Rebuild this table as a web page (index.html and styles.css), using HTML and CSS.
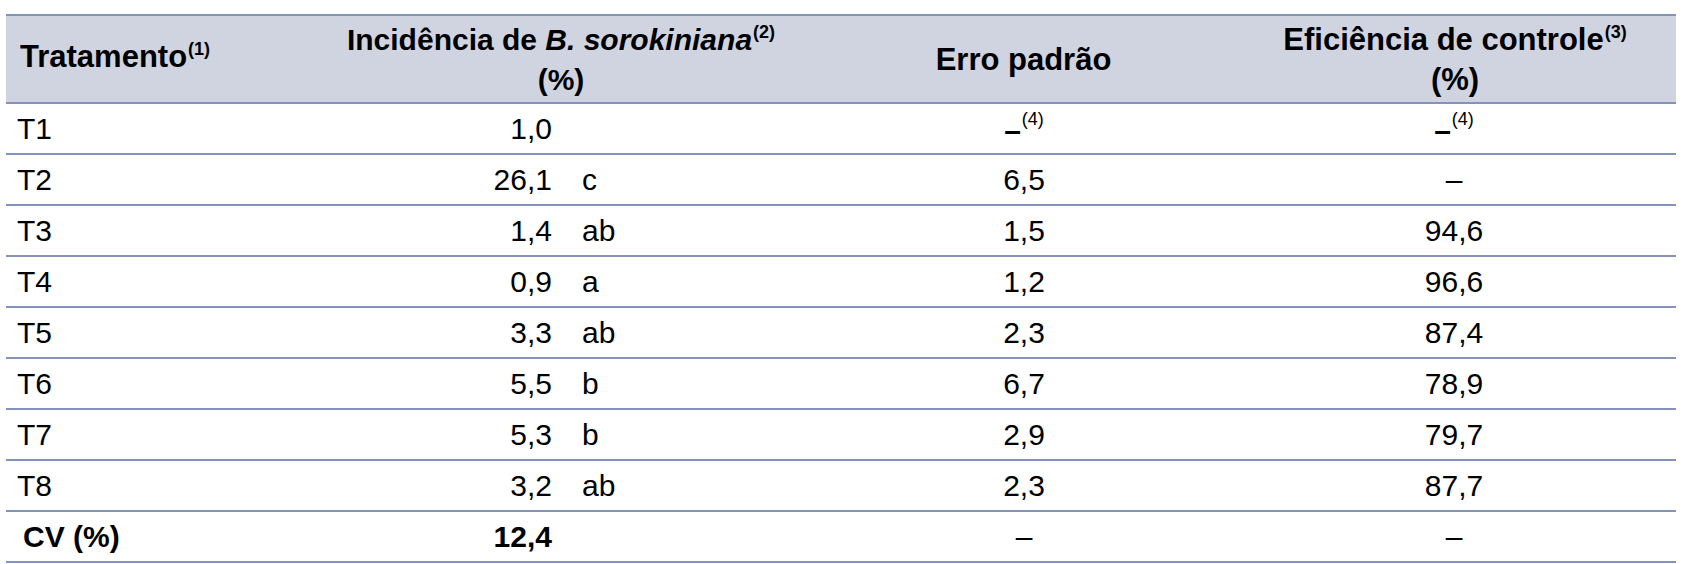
FILE: index.html
```html
<!DOCTYPE html>
<html lang="pt">
<head>
<meta charset="utf-8">
<title>Tabela</title>
<link rel="stylesheet" href="styles.css">
</head>
<body>
<table class="tbl">
  <colgroup>
    <col class="c-trat">
    <col class="c-val">
    <col class="c-let">
    <col class="c-erro">
    <col class="c-efic">
  </colgroup>
  <thead>
    <tr class="head">
      <th class="h-trat">Tratamento<sup>(1)</sup></th>
      <th class="h-inc" colspan="2">Incidência de <i>B. sorokiniana</i><sup>(2)</sup><br>(%)</th>
      <th class="h-erro">Erro padrão</th>
      <th class="h-efic">Eficiência de controle<sup>(3)</sup><br>(%)</th>
    </tr>
  </thead>
  <tbody>
    <tr><td class="trat">T1</td><td class="val">1,0</td><td class="let"></td><td class="erro"><span class="lowdash">–</span><sup>(4)</sup></td><td class="efic"><span class="lowdash">–</span><sup>(4)</sup></td></tr>
    <tr><td class="trat">T2</td><td class="val">26,1</td><td class="let">c</td><td class="erro">6,5</td><td class="efic">–</td></tr>
    <tr><td class="trat">T3</td><td class="val">1,4</td><td class="let">ab</td><td class="erro">1,5</td><td class="efic">94,6</td></tr>
    <tr><td class="trat">T4</td><td class="val">0,9</td><td class="let">a</td><td class="erro">1,2</td><td class="efic">96,6</td></tr>
    <tr><td class="trat">T5</td><td class="val">3,3</td><td class="let">ab</td><td class="erro">2,3</td><td class="efic">87,4</td></tr>
    <tr><td class="trat">T6</td><td class="val">5,5</td><td class="let">b</td><td class="erro">6,7</td><td class="efic">78,9</td></tr>
    <tr><td class="trat">T7</td><td class="val">5,3</td><td class="let">b</td><td class="erro">2,9</td><td class="efic">79,7</td></tr>
    <tr><td class="trat">T8</td><td class="val">3,2</td><td class="let">ab</td><td class="erro">2,3</td><td class="efic">87,7</td></tr>
    <tr class="cv"><td class="trat">CV (%)</td><td class="val">12,4</td><td class="let"></td><td class="erro">–</td><td class="efic">–</td></tr>
  </tbody>
</table>
</body>
</html>
```
FILE: styles.css
```css
html, body {
  margin: 0;
  padding: 0;
  background: #ffffff;
}

body {
  padding: 14px 0 0 6px;
  font-family: "Liberation Sans", Arial, sans-serif;
  color: #000000;
}

.tbl {
  border-collapse: collapse;
  table-layout: fixed;
  width: 1670px;
  font-size: 30px;
}

.c-trat { width: 272px; }
.c-val { width: 282px; }
.c-let { width: 278px; }
.c-erro { width: 362px; }
.c-efic { width: 476px; }

.tbl tr {
  border-top: 2px solid #8592bb;
  border-bottom: 2px solid #8592bb;
}

.head {
  background: #d0d4e0;
  height: 88px;
}

.head th {
  font-size: 31px;
  font-weight: bold;
  line-height: 35px;
  padding: 0;
  vertical-align: middle;
}

.h-trat {
  text-align: left;
  padding-left: 14px !important;
}

.head .h-inc {
  font-size: 30px;
  text-align: center;
  padding-left: 6px;
}

.h-erro {
  text-align: center;
  padding-left: 9px !important;
}

.h-efic {
  text-align: center;
  padding-left: 34px !important;
}

sup {
  font-size: 18px;
  font-weight: normal;
  vertical-align: 0;
  position: relative;
  top: -12px;
  margin-left: 1px;
}

.head sup {
  font-weight: bold;
}

tbody tr {
  height: 51px;
}

tbody td {
  padding: 0;
  line-height: 34px;
  vertical-align: middle;
}

.trat {
  text-align: left;
  padding-left: 11px !important;
}

.val {
  text-align: right;
  padding-right: 8px !important;
}

.let {
  text-align: left;
  padding-left: 22px !important;
}

.erro {
  text-align: center;
  padding-left: 10px !important;
}

.efic {
  text-align: center;
  padding-left: 32px !important;
}

.cv td {
  font-weight: bold;
}

.cv .trat {
  padding-left: 17px !important;
}

.cv .erro, .cv .efic {
  font-weight: normal;
}

.lowdash {
  font-weight: bold;
  position: relative;
  top: 4px;
}
```
